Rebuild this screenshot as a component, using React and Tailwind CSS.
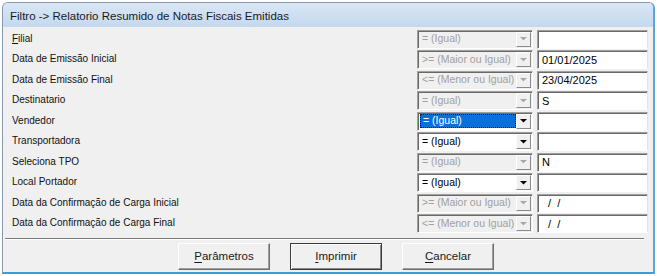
import React from 'react';

const rows = [
  { label: 'Filial', key: 'F', op: '= (Igual)', enabled: false, value: '' },
  { label: 'Data de Emissão Inicial', op: '>= (Maior ou Igual)', enabled: false, value: '01/01/2025' },
  { label: 'Data de Emissão Final', op: '<= (Menor ou Igual)', enabled: false, value: '23/04/2025' },
  { label: 'Destinatario', op: '= (Igual)', enabled: false, value: 'S' },
  { label: 'Vendedor', op: '= (Igual)', enabled: true, focused: true, value: '' },
  { label: 'Transportadora', op: '= (Igual)', enabled: true, value: '' },
  { label: 'Seleciona TPO', op: '= (Igual)', enabled: false, value: 'N' },
  { label: 'Local Portador', op: '= (Igual)', enabled: true, value: '' },
  { label: 'Data da Confirmação de Carga Inicial', op: '>= (Maior ou Igual)', enabled: false, value: '  /  /' },
  { label: 'Data da Confirmação de Carga Final', op: '<= (Menor ou Igual)', enabled: false, value: '  /  /' },
];

function Arrow({ enabled }) {
  return (
    <svg width="9" height="6" viewBox="0 0 9 6">
      {!enabled && <path d="M2 2h6l-3 3z" fill="#ffffff" />}
      <path d="M1 1h7l-3.5 3.5z" fill={enabled ? '#000000' : '#a8a8a8'} />
    </svg>
  );
}

function Combo({ op, enabled, focused }) {
  return (
    <div
      className={`relative flex h-[19px] w-[116px] items-center border border-t-[#a0a0a0] border-l-[#a0a0a0] border-b-white border-r-white shadow-[inset_1px_1px_0_#696969] ${
        enabled ? 'bg-white' : 'bg-[#f0f0f0]'
      }`}
    >
      {focused ? (
        <div className="ml-[2px] flex h-[14px] w-[96px] items-center border border-dotted border-[#1a1a1a] bg-[#0a6fd8] pl-[2px] text-[10.5px] text-white">
          {op}
        </div>
      ) : (
        <span className={`pl-[4px] text-[10.5px] ${enabled ? 'text-black' : 'text-[#a0a0a0]'}`}>{op}</span>
      )}
      <div className="absolute right-[1px] top-[1px] bottom-[1px] flex w-[15px] items-center justify-center border border-t-white border-l-white border-b-[#8a8a8a] border-r-[#8a8a8a] bg-[#f0f0f0]">
        <Arrow enabled={enabled} />
      </div>
    </div>
  );
}

function Button({ children, first, isDefault }) {
  return (
    <button
      className={`flex h-[27px] w-[92px] items-center justify-center bg-[#f0f0f0] text-[11.5px] text-[#1a1a1a] ${
        isDefault
          ? 'border border-[#3a3a3a] shadow-[inset_1px_1px_0_#ffffff,inset_-1px_-1px_0_#8a8a8a]'
          : 'border border-t-white border-l-white border-b-[#6e6e6e] border-r-[#6e6e6e] shadow-[inset_-1px_-1px_0_#a0a0a0]'
      }`}
    >
      <span className="underline underline-offset-[2px]">{first}</span>
      {children}
    </button>
  );
}

export default function App() {
  return (
    <div className="h-[276px] w-[657px] bg-white pl-[2px] pt-[2px]" style={{ fontFamily: '"Liberation Sans", Arial, sans-serif' }}>
      <div className="flex h-[272px] w-[653px] flex-col overflow-hidden rounded-t-[6px] border border-[#8598ae] border-r-2 border-r-[#5aa6da] border-b-2 border-b-[#33a0d8] bg-[#f0f0f0]">
        {/* barra de titulo */}
        <div className="flex h-[24px] shrink-0 items-center bg-gradient-to-b from-[#dae7f5] to-[#c4d8ee] pl-[7px] pt-[3px] text-[11.5px] text-[#1a1a1a]">
          Filtro -&gt; Relatorio Resumido de Notas Fiscais Emitidas
        </div>

        <div className="flex flex-col pt-[2px] pr-[5px]">
          {rows.map((r) => (
            <div key={r.label} className="flex h-[20.5px] items-center">
              <div className="mb-[2px] flex-1 pl-[9px] text-[10px] text-[#111111]">
                {r.key ? (
                  <>
                    <span className="underline">{r.key}</span>
                    {r.label.slice(1)}
                  </>
                ) : (
                  r.label
                )}
              </div>
              <Combo op={r.op} enabled={r.enabled} focused={r.focused} />
              <div className="ml-[4px] flex h-[19px] w-[111px] items-center whitespace-pre border border-t-[#a0a0a0] border-l-[#a0a0a0] border-b-white border-r-[#e3e3e3] bg-white pl-[4px] text-[11px] text-black shadow-[inset_1px_1px_0_#696969]">
                {r.value}
              </div>
            </div>
          ))}
        </div>

        <div className="ml-[2px] mr-[9px] mt-[4px] h-[2px] border-t border-t-[#7a7a7a] border-b border-b-white" />

        <div className="mt-[3px] flex gap-[20px] pl-[175px]">
          <Button first="P">arâmetros</Button>
          <Button first="I" isDefault>mprimir</Button>
          <Button first="C">ancelar</Button>
        </div>
      </div>
    </div>
  );
}
